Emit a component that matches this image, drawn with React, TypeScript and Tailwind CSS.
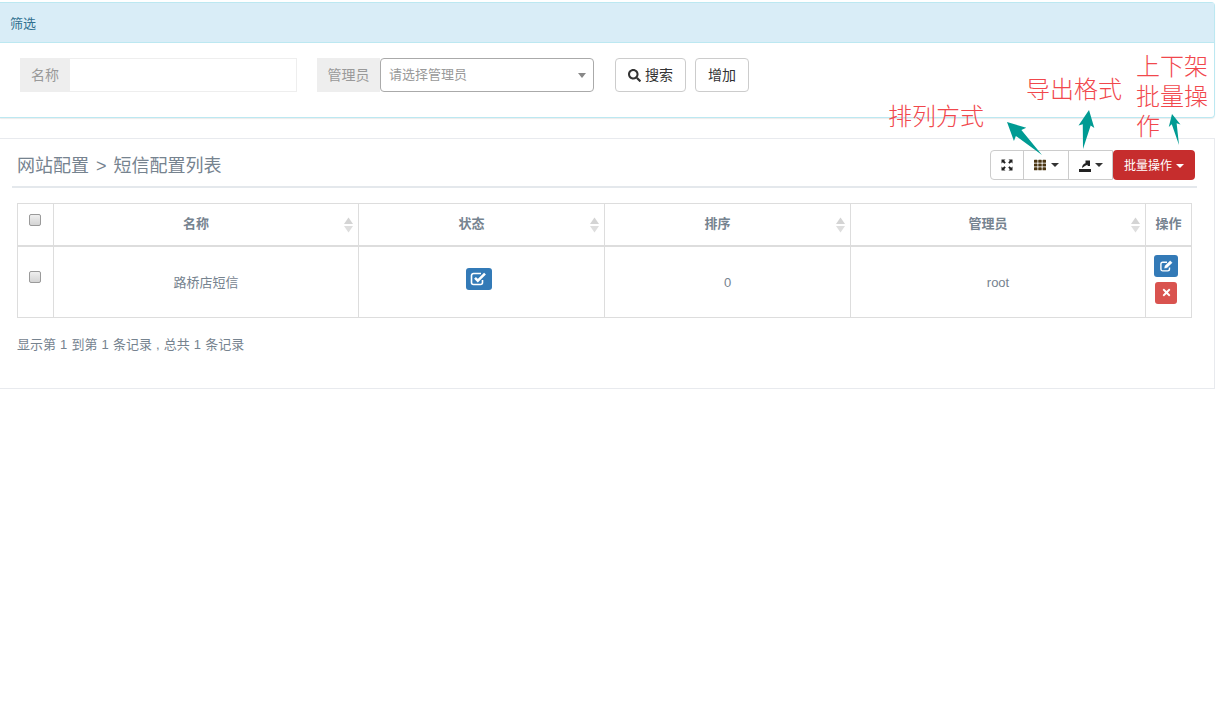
import { FaSearch, FaTimes, FaTh } from "react-icons/fa";

const Caret = ({ white }: { white?: boolean }) => (
  <span className={`inline-block w-0 h-0 border-x-[4px] border-x-transparent border-t-[4px] ${white ? "border-t-white" : "border-t-[#333]"}`} />
);

const SortIcon = () => (
  <svg width="9" height="16" viewBox="0 0 9 16" className="absolute right-[5px] top-[13px]">
    <path d="M4.5 0.5 L9 7 L0 7 Z" fill="#d4d4d4" />
    <path d="M4.5 15.5 L9 9 L0 9 Z" fill="#dedede" />
  </svg>
);

const Checkbox = () => (
  <span className="inline-block w-[12px] h-[12px] rounded-[2px] border border-[#9a9a9a] bg-gradient-to-b from-[#efefef] to-[#d4d4d4]" />
);

const Arrow = ({ x1, y1, x2, y2, head, half, shaft }: { x1: number; y1: number; x2: number; y2: number; head: number; half: number; shaft: number }) => {
  // tail is a point, shaft widens up to the barbs
  const dx = x2 - x1;
  const dy = y2 - y1;
  const len = Math.sqrt(dx * dx + dy * dy);
  const ux = dx / len;
  const uy = dy / len;
  const nx = -uy;
  const ny = ux;
  const hx = x2 - ux * head;
  const hy = y2 - uy * head;
  const pts = [
    [x1, y1],
    [hx + nx * shaft, hy + ny * shaft],
    [hx - ux * 2 + nx * half, hy - uy * 2 + ny * half],
    [x2, y2],
    [hx - ux * 2 - nx * half, hy - uy * 2 - ny * half],
    [hx - nx * shaft, hy - ny * shaft],
  ];
  return <polygon points={pts.map((p) => p.join(",")).join(" ")} fill="#009b93" />;
};

const Note = ({ className, children }: { className: string; children: React.ReactNode }) => (
  <div className={`absolute text-[#f1474c] text-[24px] leading-[30px] font-light ${className}`}>{children}</div>
);

export default function App() {
  return (
    <div
      className="relative h-[719px] bg-white text-[13px] text-[#76838f] overflow-hidden"
      style={{ fontFamily: '"Liberation Sans", "Noto Sans CJK SC", sans-serif' }}
    >
      {/* filter panel */}
      <div className="mt-[2px] mr-px h-[116px] border border-l-0 border-[#bce8f1] rounded-r-[4px] shadow-[0_1px_1px_rgba(0,0,0,0.08)]">
        <div className="h-[40px] bg-[#d9edf7] border-b border-[#bce8f1] pl-[10px] pt-[12px] text-[13px] leading-[18px] text-[#31708f]">
          筛选
        </div>
        <div className="flex pl-[20px] pt-[15px]">
          <div className="flex h-[34px]">
            <span className="w-[50px] bg-[#eeeeee] border border-[#eeeeee] text-center text-[14px] leading-[32px] text-[#999]">名称</span>
            <div className="w-[227px] border border-[#eeeeee] border-l-0" />
          </div>
          <div className="flex h-[34px] ml-[20px]">
            <span className="w-[63px] bg-[#eeeeee] text-center text-[14px] leading-[34px] text-[#999]">管理员</span>
            <div className="relative w-[214px] border border-[#aaaaaa] rounded-[4px] pl-[8px] text-[13px] leading-[32px] text-[#999]">
              请选择管理员
              <span className="absolute right-[7px] top-[14px] w-0 h-0 border-x-[4px] border-x-transparent border-t-[5px] border-t-[#888]" />
            </div>
          </div>
          <button className="flex items-center justify-center gap-[4px] ml-[21px] w-[71px] h-[34px] border border-[#cccccc] rounded-[4px] text-[14px] text-[#333]">
            <FaSearch className="text-[13px]" />
            搜索
          </button>
          <button className="ml-[9px] w-[54px] h-[34px] border border-[#cccccc] rounded-[4px] text-[14px] text-[#333]">增加</button>
        </div>
      </div>

      {/* list box */}
      <div className="mt-[20px] mr-px h-[251px] border border-l-0 border-[#e8eaee] pt-[11px]">
        <div className="ml-[12px] mr-[17px] flex justify-between items-start border-b-2 border-[#e4e8ec] h-[38px]">
          <div className="pl-[5px] pt-[4px] text-[18px] leading-[25px] [word-spacing:2px]">网站配置 &gt; 短信配置列表</div>
          <div className="flex h-[30px] mr-[2px]">
            <div className="flex border border-[#cccccc] rounded-l-[4px]">
              <div className="w-[33px] flex items-center justify-center border-r border-[#cccccc]">
                <svg width="12" height="12" viewBox="0 0 12 12" fill="#222">
                  <path d="M0.5 0.5H4.5L3.2 1.8 4.8 3.4 3.4 4.8 1.8 3.2 0.5 4.5Z" />
                  <path d="M11.5 0.5V4.5L10.2 3.2 8.6 4.8 7.2 3.4 8.8 1.8 7.5 0.5Z" />
                  <path d="M0.5 11.5V7.5L1.8 8.8 3.4 7.2 4.8 8.6 3.2 10.2 4.5 11.5Z" />
                  <path d="M11.5 11.5H7.5L8.8 10.2 7.2 8.6 8.6 7.2 10.2 8.8 11.5 7.5Z" />
                </svg>
              </div>
              <div className="w-[45px] flex items-center justify-center gap-[5px] border-r border-[#cccccc]">
                <FaTh className="text-[12px] text-[#4a3410]" />
                <Caret />
              </div>
              <div className="w-[43px] flex items-center justify-center gap-[4px]">
                <svg width="12" height="13" viewBox="0 0 12 13" fill="#222">
                  <path d="M0 10H12V13H0Z" />
                  <path d="M3 9C3.2 6 4.6 4.6 6.5 4.2V1.5L11 1.5 11 7 8.6 7V5.8C7 6.3 5 7.5 3 9Z" />
                </svg>
                <Caret />
              </div>
            </div>
            <div className="flex items-center justify-center gap-[4px] w-[82px] pt-px bg-[#c62d2d] rounded-[4px] text-[12px] text-white">
              批量操作
              <Caret white />
            </div>
          </div>
        </div>

        <table className="ml-[17px] mt-[15px] w-[1175px] table-fixed border-collapse border border-[#dddddd]">
          <colgroup>
            <col className="w-[36px]" />
            <col className="w-[305px]" />
            <col className="w-[246px]" />
            <col className="w-[246px]" />
            <col className="w-[295px]" />
            <col className="w-[46px]" />
          </colgroup>
          <thead>
            <tr className="h-[42px] border-b-2 border-[#dddddd] font-bold text-[13px]">
              <th className="border border-[#dddddd] align-top pt-[8px] pr-[2px]">
                <Checkbox />
              </th>
              <th className="relative border border-[#dddddd] pr-[20px] pb-[2px]">名称<SortIcon /></th>
              <th className="relative border border-[#dddddd] pr-[20px] pb-[2px]">状态<SortIcon /></th>
              <th className="relative border border-[#dddddd] pr-[20px] pb-[2px]">排序<SortIcon /></th>
              <th className="relative border border-[#dddddd] pr-[20px] pb-[2px]">管理员<SortIcon /></th>
              <th className="border border-[#dddddd] pb-[2px]">操作</th>
            </tr>
          </thead>
          <tbody>
            <tr className="h-[72px] text-center">
              <td className="border border-[#dddddd] align-top pt-[22px] pr-[2px]">
                <Checkbox />
              </td>
              <td className="border border-[#dddddd] pt-[1px]">路桥店短信</td>
              <td className="border border-[#dddddd] align-top pt-[21px] pr-[6px]">
                <span className="inline-flex items-center justify-center w-[26px] h-[22px] bg-[#337ab7] rounded-[3px] text-white">
                  <svg width="17" height="15" viewBox="0 0 17 15" fill="none" stroke="currentColor">
                    <path d="M12.5 9v2.5a2 2 0 0 1-2 2H3.5a2 2 0 0 1-2-2V4.5a2 2 0 0 1 2-2H11" strokeWidth="1.6" />
                    <path d="M5 6.8 7.8 9.6 15 2.6" strokeWidth="2.6" />
                  </svg>
                </span>
              </td>
              <td className="border border-[#dddddd] pt-[1px]">0</td>
              <td className="border border-[#dddddd] pt-[1px]">root</td>
              <td className="border border-[#dddddd] align-top pt-[8px] pr-[5px]">
                <div className="flex flex-col items-center gap-[5px]">
                  <span className="flex items-center justify-center w-[24px] h-[22px] bg-[#337ab7] rounded-[3px] text-white">
                    <svg width="13" height="12" viewBox="0 0 13 12" fill="none" stroke="currentColor">
                      <path d="M9.5 7.5v1.6a1.8 1.8 0 0 1-1.8 1.8H2.7A1.8 1.8 0 0 1 .9 9.1V4.1a1.8 1.8 0 0 1 1.8-1.8H7" strokeWidth="1.4" />
                      <path d="M4.5 8.2 5 5.8 10.2 .8 12.2 2.8 7 7.8Z" fill="currentColor" strokeWidth="0.3" />
                    </svg>
                  </span>
                  <span className="flex items-center justify-center w-[22px] h-[22px] bg-[#d9534f] rounded-[3px] text-white">
                    <FaTimes className="text-[11px]" />
                  </span>
                </div>
              </td>
            </tr>
          </tbody>
        </table>
        <div className="ml-[17px] mt-[18px] text-[13px] leading-[18px] [word-spacing:0.5px]">显示第 1 到第 1 条记录 , 总共 1 条记录</div>
      </div>

      {/* annotations */}
      <div style={{ fontFamily: '"Liberation Serif", "Noto Sans CJK SC", serif' }}>
        <Note className="left-[888px] top-[102px]">排列方式</Note>
        <Note className="left-[1026px] top-[75px]">导出格式</Note>
        <Note className="left-[1136px] top-[52px] w-[72px]">上下架批量操作</Note>
      </div>
      <svg width="1216" height="719" className="absolute left-0 top-0 pointer-events-none">
        <Arrow x1={1042} y1={155} x2={1007} y2={122} head={16} half={9} shaft={4} />
        <Arrow x1={1083} y1={149} x2={1089} y2={110} head={15} half={8} shaft={4} />
        <Arrow x1={1179} y1={145} x2={1172} y2={114} head={10} half={6} shaft={2.5} />
      </svg>
    </div>
  );
}
